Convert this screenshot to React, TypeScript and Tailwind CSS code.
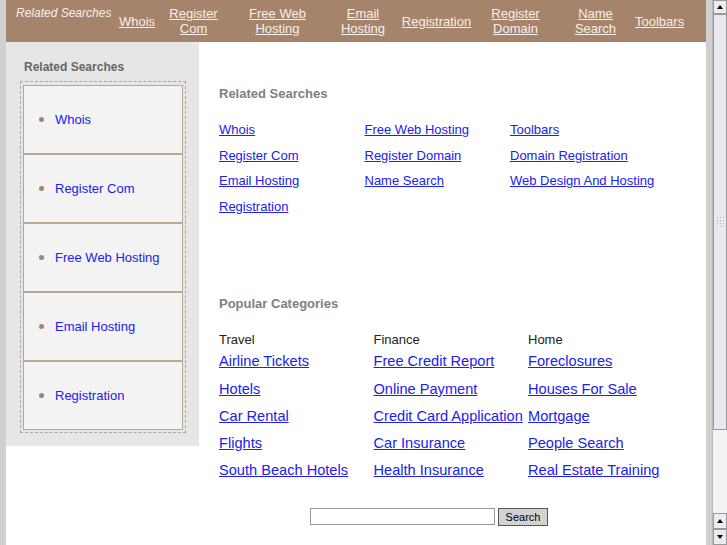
const headerLinks = [
  { label: ['Whois'], w: 'w-[46px]' },
  { label: ['Register', 'Com'], w: 'w-[67px]' },
  { label: ['Free Web', 'Hosting'], w: 'w-[101px]' },
  { label: ['Email', 'Hosting'], w: 'w-[70px]' },
  { label: ['Registration'], w: 'w-[77px]' },
  { label: ['Register', 'Domain'], w: 'w-[81px]' },
  { label: ['Name', 'Search'], w: 'w-[79px]' },
  { label: ['Toolbars'], w: 'w-[49px]' },
];

const sideLinks = ['Whois', 'Register Com', 'Free Web Hosting', 'Email Hosting', 'Registration'];

const related = [
  'Whois', 'Free Web Hosting', 'Toolbars',
  'Register Com', 'Register Domain', 'Domain Registration',
  'Email Hosting', 'Name Search', 'Web Design And Hosting',
  'Registration',
];

const categories = [
  { title: 'Travel', links: ['Airline Tickets', 'Hotels', 'Car Rental', 'Flights', 'South Beach Hotels'] },
  { title: 'Finance', links: ['Free Credit Report', 'Online Payment', 'Credit Card Application', 'Car Insurance', 'Health Insurance'] },
  { title: 'Home', links: ['Foreclosures', 'Houses For Sale', 'Mortgage', 'People Search', 'Real Estate Training'] },
];

function Scrollbar() {
  return (
    <div className="flex h-full w-[15px] flex-col bg-[#f3f3f5] border-l border-[#b8b8b8]">
      <div className="flex h-[14px] items-center justify-center border border-[#9a9a9a] bg-[#ececf0]">
        <div className="h-0 w-0 border-x-[3px] border-b-[4px] border-x-transparent border-b-black" />
      </div>
      <div className="flex h-[416px] flex-col items-center justify-center border border-[#9a9a9a] bg-[#e9e9ef]">
        <div className="grid grid-cols-3 gap-[2px]">
          {Array.from({ length: 12 }).map((_, i) => (
            <div key={i} className="h-[1px] w-[1px] bg-[#b0b0b8]" />
          ))}
        </div>
      </div>
      <div className="flex-1" />
      <div className="flex h-[16px] items-center justify-center border border-[#9a9a9a] bg-[#ececf0]">
        <div className="h-0 w-0 border-x-[3px] border-b-[4px] border-x-transparent border-b-black" />
      </div>
      <div className="flex h-[16px] items-center justify-center border border-[#9a9a9a] bg-[#ececf0]">
        <div className="h-0 w-0 border-x-[3px] border-t-[4px] border-x-transparent border-t-black" />
      </div>
    </div>
  );
}

export default function App() {
  return (
    <div className="flex h-[545px] w-[727px] overflow-hidden bg-[#d0d0d0] font-['Liberation_Sans',Arial,sans-serif]">
      <div className="px-[6px]">
        <div className="flex h-full w-[700px] flex-col bg-white">
          {/* top bar */}
          <div className="flex h-[42px] shrink-0 items-center bg-[#a6846b] text-[13px] leading-[15px] text-[#f6f0ea]">
            <div className="w-[108px] self-start pl-[10px] pt-[6px] text-[12px] italic">Related Searches</div>
            {headerLinks.map((l) => (
              <a key={l.label.join(' ')} href="#" className={`${l.w} text-center underline`}>
                {l.label.map((t) => (
                  <div key={t}>{t}</div>
                ))}
              </a>
            ))}
          </div>

          <div className="flex items-start">
            {/* sidebar */}
            <div className="w-[193px] shrink-0 bg-[#e6e6e6] pb-[13px] pl-[14px] pr-[13px] pt-[18px]">
              <div className="mb-[7px] pl-[4px] text-[12px] font-bold leading-[14px] text-[#666]">Related Searches</div>
              <div className="border border-dashed border-[#a8a8a8] px-[2px] pb-[2px] pt-[3px]">
                {sideLinks.map((s) => (
                  <div key={s} className="flex h-[69px] items-center border border-[#bca591] bg-[#f3f3f3] pl-[15px]">
                    <span className="mr-[11px] h-[5px] w-[5px] rounded-full bg-[#a58468]" />
                    <a href="#" className="text-[13px] text-[#2020f0]">{s}</a>
                  </div>
                ))}
              </div>
            </div>

            {/* main */}
            <div className="flex-1 pl-[20px] pt-[44px]">
              <div className="text-[13px] font-bold leading-[16px] text-[#808080]">Related Searches</div>
              <div className="mt-[15px] grid grid-cols-[145.5px_145.5px_1fr] text-[13px] leading-[25.6px]">
                {related.map((r) => (
                  <a key={r} href="#" className="text-[#2020f0] underline">
                    {r}
                  </a>
                ))}
              </div>

              <div className="mt-[77px] text-[13px] font-bold leading-[16px] text-[#808080]">Popular Categories</div>
              <div className="mt-[20px] flex">
                {categories.map((c) => (
                  <div key={c.title} className="flex w-[154.5px] flex-col">
                    <div className="text-[13px] leading-[16px] text-[#222]">{c.title}</div>
                    {c.links.map((l) => (
                      <a key={l} href="#" className="whitespace-nowrap text-[14.6px] leading-[27.25px] text-[#2020f0] underline">
                        {l}
                      </a>
                    ))}
                  </div>
                ))}
              </div>

              <div className="ml-[91px] mt-[23px] flex items-start gap-[3px]">
                <input className="h-[17px] w-[185px] border border-[#999] bg-white outline-none" />
                <button className="h-[18px] w-[50px] border border-[#555] bg-[#d2d2d2] text-[11px] leading-[14px] text-black">
                  Search
                </button>
              </div>
            </div>
          </div>
        </div>
      </div>
      <Scrollbar />
    </div>
  );
}
